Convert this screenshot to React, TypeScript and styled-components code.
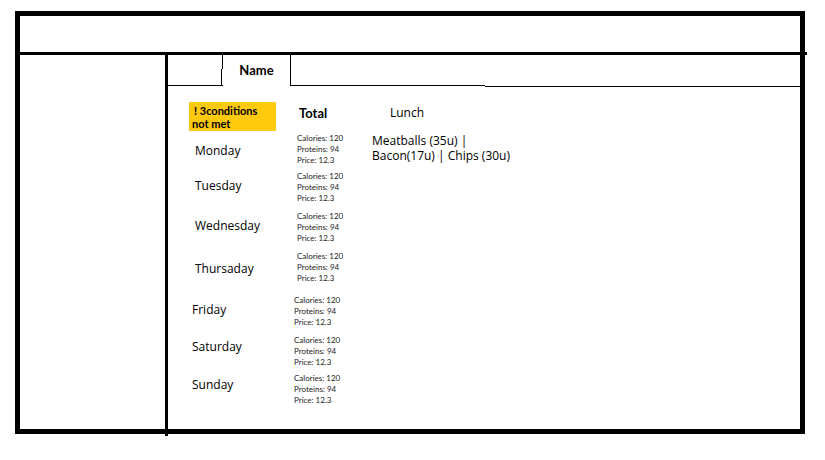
import React from "react";
import styled, { createGlobalStyle } from "styled-components";

const GlobalStyle = createGlobalStyle`
  *, *::before, *::after { box-sizing: border-box; }
  body {
    margin: 0;
    background: #fff;
    color: #000;
    font-family: Lato, "Open Sans", sans-serif;
  }
`;

const Page = styled.div`
  display: flex;
  min-height: 100vh;
  padding: 11px 20px 26px 15px;
`;

const Frame = styled.div`
  flex: 1;
  display: flex;
  flex-direction: column;
  border: 5px solid #000;
`;

const Header = styled.header`
  height: 39px;
  margin-right: -7px;
  border-bottom: 3px solid #000;
`;

const Body = styled.div`
  flex: 1;
  display: flex;
`;

const Sidebar = styled.aside`
  width: 148px;
  flex-shrink: 0;
  margin-bottom: -7px;
  border-right: 3px solid #000;
`;

const Main = styled.main`
  flex: 1;
  min-width: 0;
`;

const Tabs = styled.div`
  display: flex;
  height: 32px;
`;

const Tab = styled.button<{ $active?: boolean }>`
  width: ${(p) => (p.$active ? 67 : 54)}px;
  height: ${(p) => (p.$active ? 30 : 31)}px;
  padding: 0;
  border: 0;
  border-bottom: ${(p) => (p.$active ? "0" : "1px solid #000")};
  background: none;
  color: #000;
  font: bold 13px/16px Lato, sans-serif;
`;

const TabDivider = styled.span`
  display: flex;
  flex-direction: column;
  width: 2px;
  height: 31px;
  margin-left: -1px;

  &::before {
    content: "";
    height: 14px;
    border-right: 1px solid #000;
  }

  &::after {
    content: "";
    flex: 1;
    border-left: 1px solid #000;
    border-bottom: 1px solid #000;
  }
`;

const TabRule = styled.span<{ $rest?: boolean }>`
  flex: ${(p) => (p.$rest ? "1" : "0 1 195px")};
  height: ${(p) => (p.$rest ? 32 : 31)}px;
  border-bottom: 1px solid #000;
  border-left: ${(p) => (p.$rest ? "0" : "1px solid #000")};
`;

const Plan = styled.table`
  width: calc(100% - 21px);
  margin: 15px 0 0 21px;
  border-collapse: collapse;
  table-layout: fixed;
  text-align: left;
`;

const Column = styled.col<{ $width?: number }>`
  width: ${(p) => (p.$width ? `${p.$width}px` : "auto")};
`;

const HeadCell = styled.th<{ $indent?: number; $light?: boolean }>`
  height: 31px;
  padding: 3px 0 0 ${(p) => p.$indent ?? 0}px;
  vertical-align: top;
  font-family: ${(p) => (p.$light ? '"Open Sans", sans-serif' : "inherit")};
  font-size: ${(p) => (p.$light ? 12 : 13)}px;
  font-weight: ${(p) => (p.$light ? 400 : 700)};
  line-height: 16px;
`;

const WarningCell = styled(HeadCell)`
  padding: 0;
`;

const Warning = styled.div`
  width: 87px;
  height: 29px;
  padding: 2px 3px 0;
  background: #ffc90e;
  font-size: 11px;
  line-height: 13px;
  text-indent: 2px;
  white-space: pre-line;
`;

const Days = styled.tbody<{ $late?: boolean }>`
  th {
    padding-left: ${(p) => (p.$late ? 3 : 6)}px;
  }
  td:nth-child(2) {
    padding-left: ${(p) => (p.$late ? 5 : 8)}px;
  }
`;

const DayRow = styled.tr<{ $height: number }>`
  height: ${(p) => p.$height}px;
  vertical-align: top;
`;

type Level = "high" | "middle" | "low";

const levelPadding: Record<Level, number> = { high: 4, middle: 7, low: 10 };

const DayName = styled.th<{ $level: Level }>`
  padding: ${(p) => levelPadding[p.$level]}px 0 0;
  font-family: "Open Sans", sans-serif;
  font-size: 12px;
  font-weight: 400;
  line-height: 16px;
`;

const Totals = styled.td`
  padding: 0;
  color: #222;
  font-size: 8px;
  line-height: 11px;
  white-space: pre;
`;

const Meal = styled.td`
  padding: 0;
  font-family: "Open Sans", sans-serif;
  font-size: 12px;
  line-height: 15px;
  white-space: pre;
`;

type Day = { name: string; height: number; level: Level; meal?: string };

const earlyDays: Day[] = [
  { name: "Monday", height: 38, level: "low", meal: "Meatballs (35u) |\nBacon(17u) | Chips (30u)" },
  { name: "Tuesday", height: 40, level: "middle" },
  { name: "Wednesday", height: 40, level: "middle" },
  { name: "Thursaday", height: 44, level: "low" },
];

const lateDays: Day[] = [
  { name: "Friday", height: 40, level: "middle" },
  { name: "Saturday", height: 38, level: "high" },
  { name: "Sunday", height: 38, level: "high" },
];

const totals = "Calories: 120\nProteins: 94\nPrice: 12.3";

const Row = ({ day }: { day: Day }) => (
  <DayRow $height={day.height}>
    <DayName scope="row" $level={day.level}>{day.name}</DayName>
    <Totals>{totals}</Totals>
    <Meal>{day.meal}</Meal>
  </DayRow>
);

export default function App() {
  return (
    <>
      <GlobalStyle />
      <Page>
        <Frame>
          <Header />
          <Body>
            <Sidebar />
            <Main>
              <Tabs>
                <Tab type="button" aria-label="Empty tab" />
                <TabDivider />
                <Tab type="button" $active>Name</Tab>
                <TabRule />
                <TabRule $rest />
              </Tabs>
              <Plan>
                <colgroup>
                  <Column $width={100} />
                  <Column $width={83} />
                  <Column />
                </colgroup>
                <thead>
                  <tr>
                    <WarningCell scope="col">
                      <Warning>{"! 3conditions\nnot met"}</Warning>
                    </WarningCell>
                    <HeadCell scope="col" $indent={10}>Total</HeadCell>
                    <HeadCell scope="col" $indent={18} $light>Lunch</HeadCell>
                  </tr>
                </thead>
                <Days>
                  {earlyDays.map((day) => <Row key={day.name} day={day} />)}
                </Days>
                <Days $late>
                  {lateDays.map((day) => <Row key={day.name} day={day} />)}
                </Days>
              </Plan>
            </Main>
          </Body>
        </Frame>
      </Page>
    </>
  );
}
